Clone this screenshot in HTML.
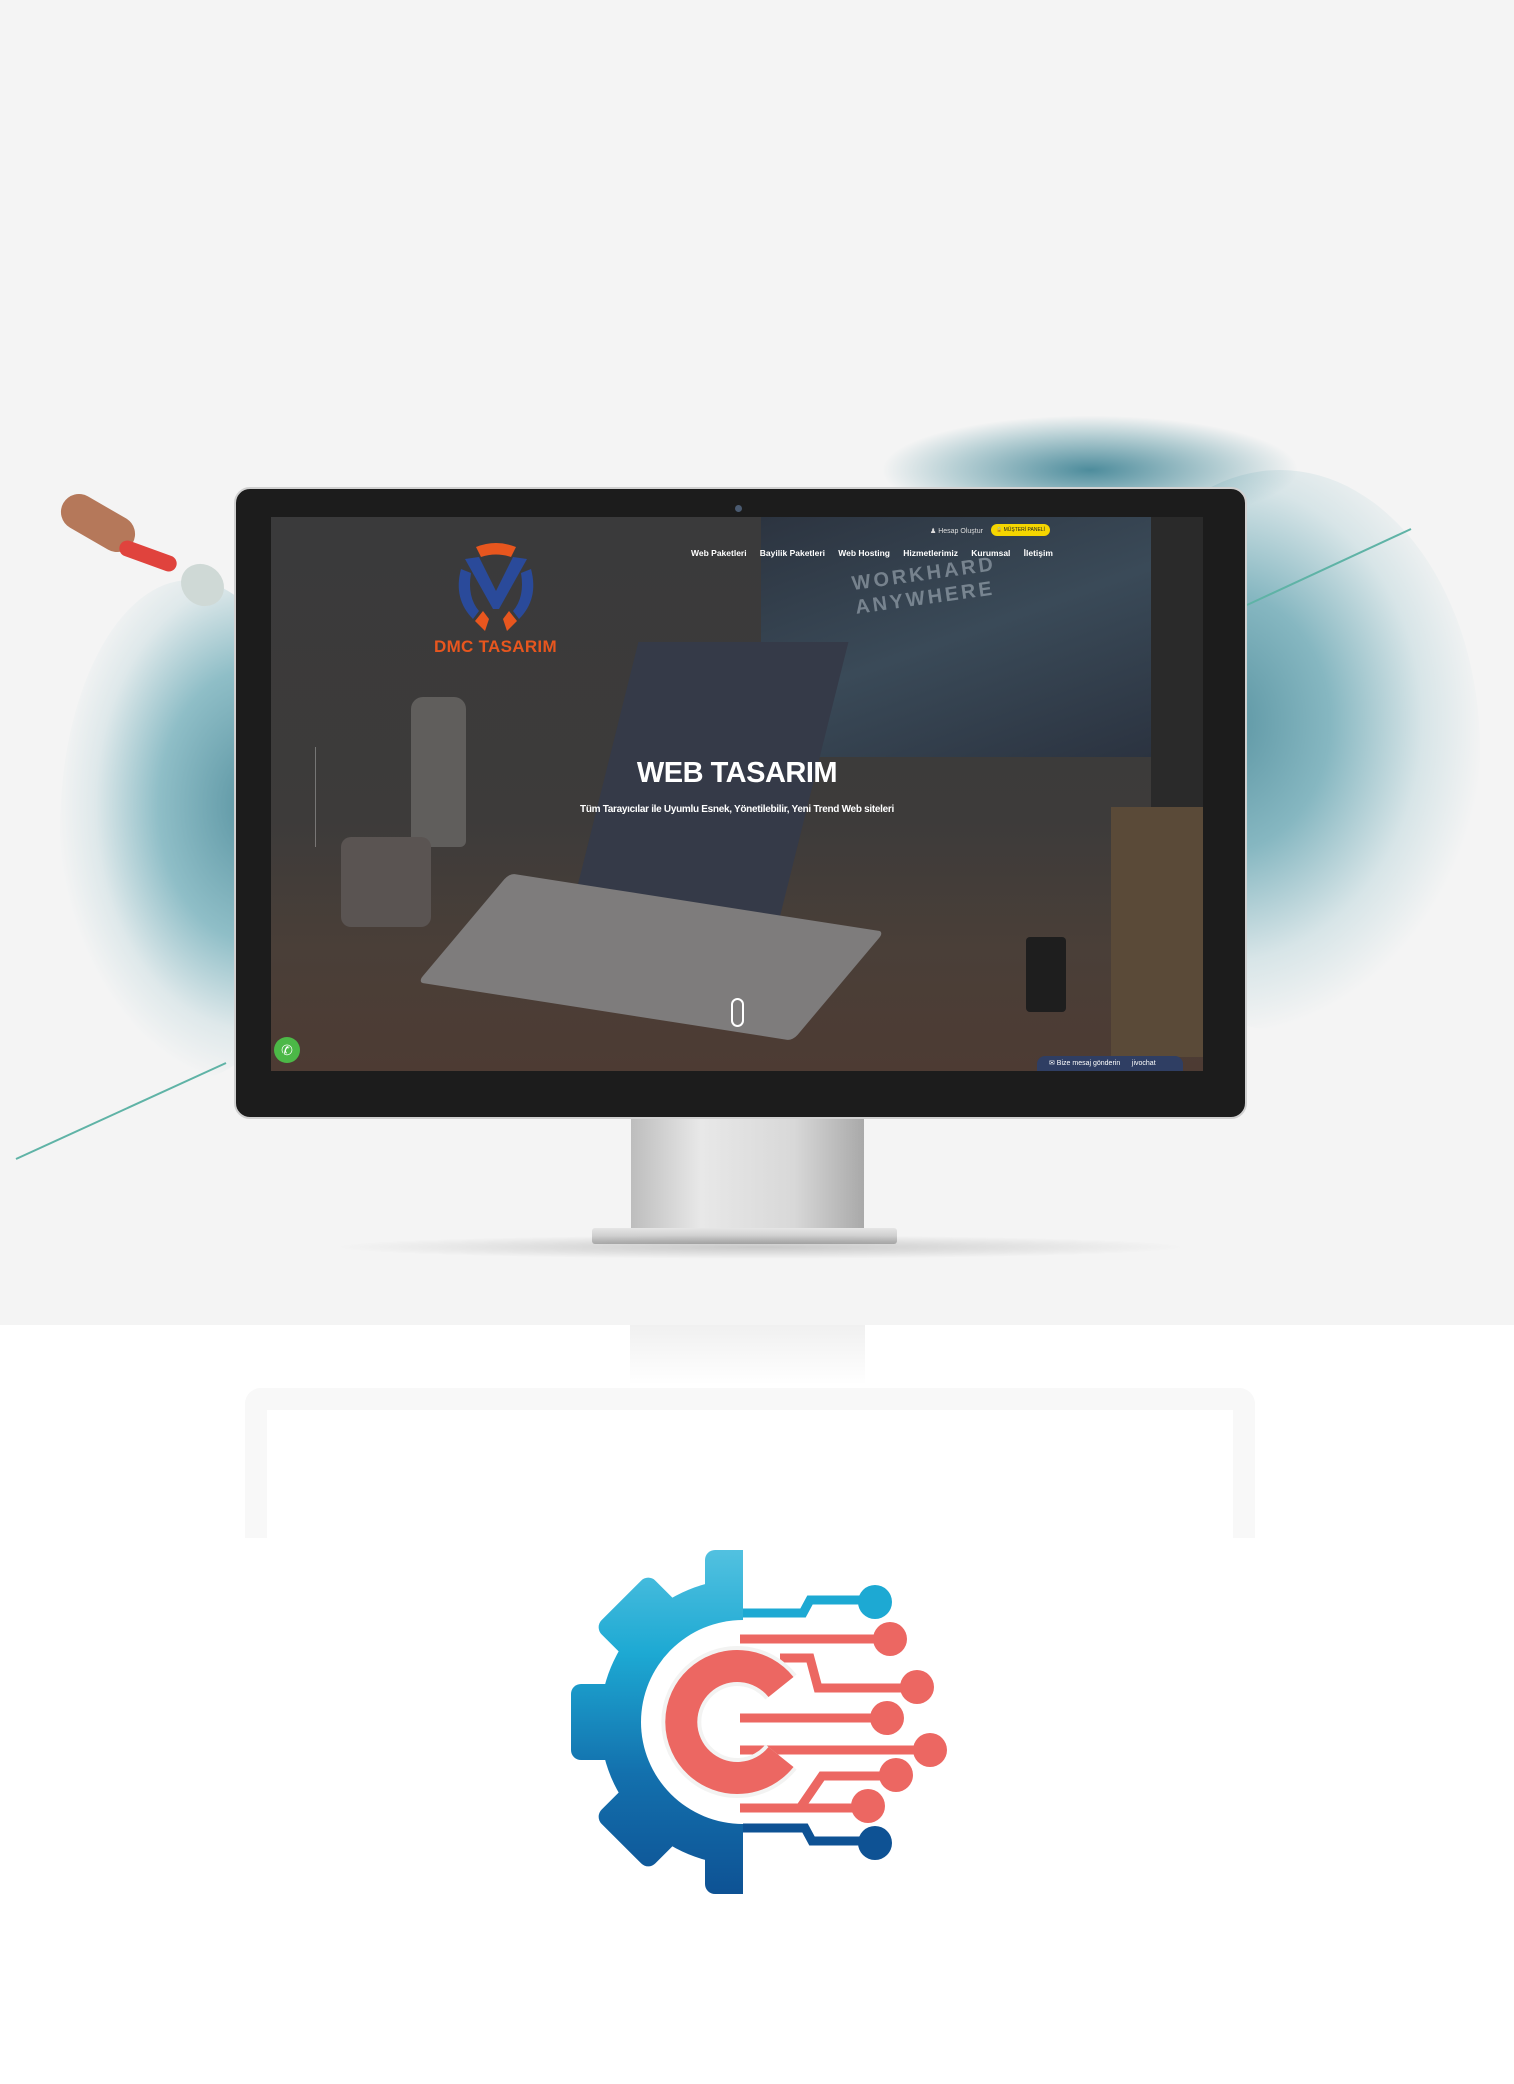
<!DOCTYPE html>
<html><head><meta charset="utf-8"><style>
*{margin:0;padding:0;box-sizing:border-box}
body{width:1514px;height:2084px;position:relative;overflow:hidden;background:#fff;font-family:"Liberation Sans",sans-serif}
.abs{position:absolute}
</style></head><body>
<div class="abs" style="left:0;top:0;width:1514px;height:1325px;background:#f4f4f4"></div>
<div class="abs" style="left:1080px;top:470px;width:400px;height:560px;border-radius:50%;background:radial-gradient(ellipse at 35% 45%,#5a94a2 0%,#86b7c1 30%,rgba(180,210,216,.45) 55%,rgba(244,244,244,0) 72%)"></div>
<div class="abs" style="left:880px;top:415px;width:420px;height:110px;border-radius:50%;background:radial-gradient(ellipse,#4d8c9c 0%,rgba(120,170,180,.5) 45%,rgba(244,244,244,0) 70%)"></div>
<div class="abs" style="left:60px;top:580px;width:260px;height:500px;border-radius:50%;background:radial-gradient(ellipse at 75% 45%,#5a94a2 0%,#8fbec7 35%,rgba(190,215,220,.4) 58%,rgba(244,244,244,0) 72%)"></div>
<div class="abs" style="left:58px;top:505px;width:80px;height:36px;background:#b5785a;border-radius:18px;transform:rotate(30deg)"></div>
<div class="abs" style="left:118px;top:548px;width:60px;height:16px;background:#e0433d;border-radius:8px;transform:rotate(20deg)"></div>
<div class="abs" style="left:180px;top:565px;width:45px;height:40px;background:#cfd9d6;border-radius:50%;transform:rotate(40deg)"></div>
<svg class="abs" style="left:0;top:0" width="1514" height="1400">
<line x1="1247" y1="605" x2="1411" y2="529" stroke="#5fb3a6" stroke-width="2"/>
<line x1="16" y1="1159" x2="226" y2="1063" stroke="#5fb3a6" stroke-width="2"/>
</svg>
<div class="abs" style="left:631px;top:1115px;width:233px;height:118px;background:linear-gradient(90deg,#bdbdbd,#e8e8e8 30%,#d8d8d8 70%,#a9a9a9);clip-path:polygon(0 0,100% 0,112% 100%,-12% 100%)"></div>
<div class="abs" style="left:592px;top:1228px;width:305px;height:16px;background:linear-gradient(#e5e5e5,#b9b9b9);border-radius:3px"></div>
<div class="abs" style="left:330px;top:1235px;width:860px;height:24px;border-radius:50%;background:radial-gradient(ellipse,rgba(0,0,0,.18),rgba(0,0,0,0) 70%)"></div>
<div class="abs" style="left:234px;top:487px;width:1013px;height:632px;background:#1c1c1c;border-radius:16px;border:2px solid #d0d0d0"></div>
<div class="abs" style="left:735px;top:505px;width:7px;height:7px;border-radius:50%;background:#4a5a70"></div>
<div class="abs" style="left:271px;top:517px;width:932px;height:554px;overflow:hidden;background:linear-gradient(180deg,#3a3a3b 0%,#3d3b3a 55%,#4a3f38 78%,#4d3b33 100%)">
  <div class="abs" style="left:490px;top:0;width:390px;height:240px;background:linear-gradient(160deg,#2c3440,#3a4a58 50%,#2b3340);"></div>
  <div class="abs" style="left:880px;top:0;width:52px;height:400px;background:#2a2a2a"></div>
  <div class="abs" style="left:330px;top:125px;width:210px;height:300px;background:#353a48;transform:skewX(-14deg)"></div>
  <div class="abs" style="left:170px;top:385px;width:420px;height:110px;background:#7e7c7c;transform:skewX(-35deg) rotate(8deg);border-radius:6px"></div>
  <div class="abs" style="left:140px;top:180px;width:55px;height:150px;background:#605e5c;border-radius:12px 12px 6px 6px"></div>
  <div class="abs" style="left:70px;top:320px;width:90px;height:90px;background:#5a5452;border-radius:10px"></div>
  <div class="abs" style="left:840px;top:290px;width:92px;height:250px;background:#5a4a38"></div>
  <div class="abs" style="left:755px;top:420px;width:40px;height:75px;background:#1e1e1e;border-radius:4px"></div>
  <div class="abs" style="left:582px;top:45px;font-size:20px;color:rgba(200,210,220,.45);font-weight:bold;letter-spacing:3px;transform:rotate(-8deg);line-height:24px">WORKHARD<br>ANYWHERE</div>
  <div class="abs" style="left:659px;top:10px;font-size:7px;color:#ddd">&#9823; Hesap Oluştur</div>
  <div class="abs" style="left:720px;top:7px;width:59px;height:12px;background:#f5d600;border-radius:6px;font-size:5px;color:#222;text-align:center;line-height:12px">&#128274; MÜŞTERİ PANELİ</div>
  <div class="abs" style="left:420px;top:31px;width:362px;font-size:8.5px;color:#fff;font-weight:bold;display:flex;justify-content:space-between"><span>Web Paketleri</span><span>Bayilik Paketleri</span><span>Web Hosting</span><span>Hizmetlerimiz</span><span>Kurumsal</span><span>İletişim</span></div>
  <svg class="abs" style="left:180px;top:22px" width="90" height="100" viewBox="0 0 90 100">
    <path d="M25 8 Q45 0 65 8 L60 18 Q45 13 30 18Z" fill="#e8561e"/>
    <path d="M14 20 L28 18 L45 52 L62 18 L76 20 L48 70 L42 70Z" fill="#2a4a9a"/>
    <path d="M10 30 Q2 60 22 80 L28 72 Q16 58 20 34Z" fill="#2a4a9a"/>
    <path d="M80 30 Q88 60 68 80 L62 72 Q74 58 70 34Z" fill="#2a4a9a"/>
    <path d="M24 82 L32 72 L38 80 L34 92Z M66 82 L58 72 L52 80 L56 92Z" fill="#e8561e"/>
  </svg>
  <div class="abs" style="left:163px;top:120px;font-size:17px;color:#e8561e;font-weight:bold;letter-spacing:.3px">DMC TASARIM</div>
  <div class="abs" style="left:44px;top:230px;width:1px;height:100px;background:rgba(255,255,255,.3)"></div>
  <div class="abs" style="left:0;top:240px;width:932px;text-align:center;font-size:29px;color:#fff;font-weight:bold;letter-spacing:-.5px">WEB TASARIM</div>
  <div class="abs" style="left:0;top:287px;width:932px;text-align:center;font-size:10px;color:#fff;font-weight:bold;letter-spacing:-.3px">Tüm Tarayıcılar ile Uyumlu Esnek, Yönetilebilir, Yeni Trend Web siteleri</div>
  <div class="abs" style="left:460px;top:481px;width:13px;height:29px;border:2px solid #fff;border-radius:7px"></div>
  <div class="abs" style="left:3px;top:520px;width:26px;height:26px;border-radius:50%;background:#4cb847;color:#fff;font-size:14px;text-align:center;line-height:26px">&#9990;</div>
  <div class="abs" style="left:766px;top:539px;width:146px;height:16px;background:#2f3e63;border-radius:8px 8px 0 0;font-size:7px;color:#fff;line-height:16px;padding-left:12px">&#9993; Bize mesaj gönderin &nbsp;&nbsp;&nbsp;&nbsp; jivochat</div>
</div>
<div class="abs" style="left:245px;top:1388px;width:1010px;height:150px;border:22px solid #f7f7f7;border-bottom:none;border-radius:16px 16px 0 0;opacity:.8"></div>
<div class="abs" style="left:630px;top:1325px;width:235px;height:60px;background:linear-gradient(#f0f0f0,#fff)"></div>
<svg class="abs" style="left:500px;top:1500px" width="500" height="420" viewBox="0 0 500 420">
<defs>
<linearGradient id="g" gradientUnits="userSpaceOnUse" x1="0" y1="50" x2="0" y2="395"><stop offset="0" stop-color="#52c1e0"/><stop offset=".3" stop-color="#1da9d3"/><stop offset=".65" stop-color="#1370ad"/><stop offset="1" stop-color="#0e5294"/></linearGradient>
<mask id="m" maskUnits="userSpaceOnUse" x="0" y="0" width="500" height="420">
<g fill="#fff">
<circle cx="243" cy="222" r="143"/>
<rect x="205" y="50" width="76" height="60" rx="10"/>
<rect x="205" y="50" width="76" height="60" rx="10" transform="rotate(-45 243 222)"/>
<rect x="205" y="50" width="76" height="60" rx="10" transform="rotate(-90 243 222)"/>
<rect x="205" y="50" width="76" height="60" rx="10" transform="rotate(-135 243 222)"/>
<rect x="205" y="50" width="76" height="60" rx="10" transform="rotate(180 243 222)"/>
</g>
<circle cx="243" cy="222" r="102" fill="#000"/>
<rect x="243" y="0" width="257" height="420" fill="#000"/>
</mask>
</defs>
<rect x="0" y="0" width="500" height="420" fill="url(#g)" mask="url(#m)"/>
<g fill="none" stroke-width="9">
<path d="M243 113 H303 L310 100 H370" stroke="#1da9d3"/>
<path d="M243 328 H305 L312 341 H370" stroke="#0e5294"/>
</g>
<circle cx="375" cy="102" r="17" fill="#1da9d3"/>
<circle cx="375" cy="343" r="17" fill="#0e5294"/>
<g fill="none" stroke="#ec6762" stroke-width="9">
<path d="M240 139 H380"/>
<path d="M280 158 H310 L318 188 H410"/>
<path d="M240 218 H380"/>
<path d="M240 250 H420"/>
<path d="M240 308 H300 L322 276 H390"/>
<path d="M300 308 H360"/>
</g>
<g fill="#ec6762">
<circle cx="390" cy="139" r="17"/><circle cx="417" cy="187" r="17"/><circle cx="387" cy="218" r="17"/><circle cx="430" cy="250" r="17"/><circle cx="396" cy="275" r="17"/><circle cx="368" cy="306" r="17"/>
</g>
<path d="M281 187 A56 56 0 1 0 281 257" fill="none" stroke="#f3f3f2" stroke-width="40"/>
<path d="M281 187 A56 56 0 1 0 281 257" fill="none" stroke="#ec6762" stroke-width="32"/>
</svg>
</body></html>
